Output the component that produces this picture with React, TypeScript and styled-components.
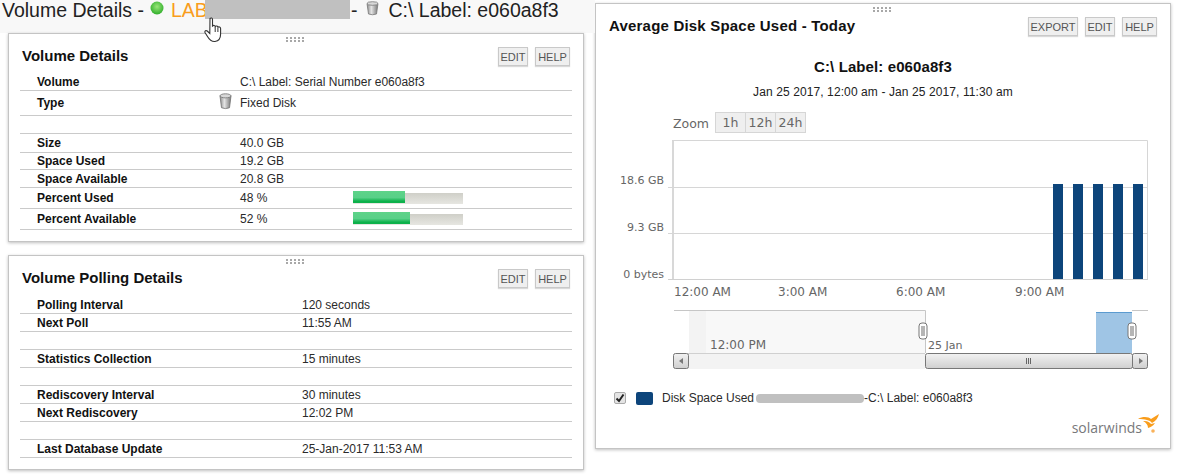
import React from 'react';
import styled, { createGlobalStyle } from 'styled-components';

const GlobalStyle = createGlobalStyle`
  html, body {
    margin: 0;
    padding: 0;
    background: #fff;
  }
  body {
    font-family: "Liberation Sans", Arial, sans-serif;
    color: #111;
  }
`;

const Page = styled.div`
  display: flex;
  align-items: flex-start;
  width: 1179px;
  height: 476px;
  overflow: hidden;
`;

const LeftColumn = styled.div`
  position: relative;
  width: 595px;
  flex: none;
`;

const RightColumn = styled.div`
  padding-top: 3px;
  width: 576px;
  flex: none;
`;

const PageHeader = styled.div`
  display: flex;
  align-items: flex-start;
  height: 33px;
  padding-left: 2px;
  font-size: 19.5px;
  line-height: 21px;
  background: #f8f8f8;
  color: #222;
  white-space: nowrap;
`;

const NodeName = styled.span`
  color: #f99d1c;
  margin-left: 7px;
  width: 34px;
`;

const Redacted = styled.span`
  display: block;
  width: 145px;
  height: 19px;
  background: #c0c0c0;
`;

const HeaderText = styled.span<{ $left?: number }>`
  margin-left: ${({ $left }) => $left ?? 0}px;
`;

const HeaderIcon = styled.svg<{ $left: number }>`
  margin-left: ${({ $left }) => $left}px;
  margin-top: 1px;
  flex: none;
`;

const HandCursor = styled.svg`
  position: absolute;
  left: 204px;
  top: 17px;
`;

const Stack = styled.div`
  display: flex;
  flex-direction: column;
  gap: 13px;
  padding-left: 8px;
  width: 576px;
`;

const Panel = styled.section<{ $height: number }>`
  box-sizing: border-box;
  height: ${({ $height }) => $height}px;
  padding: 0 11px;
  background: #fff;
  border: 1px solid #c4c4c4;
  box-shadow: 0 1px 3px rgba(0, 0, 0, 0.25);
`;

const Grip = styled.div`
  width: 20px;
  height: 5px;
  margin: 3px auto 0;
  background-image: radial-gradient(circle at 1px 1px, #a8a8a8 1px, transparent 1px);
  background-size: 4px 3px;
`;

const PanelHead = styled.div<{ $height: number }>`
  box-sizing: border-box;
  display: flex;
  align-items: flex-start;
  justify-content: space-between;
  height: ${({ $height }) => $height}px;
  padding: 5px 2px 0 2px;
`;

const PanelTitle = styled.h2<{ $spaced?: boolean }>`
  margin: 0;
  font-size: 15px;
  line-height: 18px;
  font-weight: bold;
  letter-spacing: ${({ $spaced }) => ($spaced ? '0.2px' : '0')};
  color: #111;
`;

const ButtonGroup = styled.div`
  display: flex;
  gap: 7px;
`;

const ActionButton = styled.button<{ $width: number }>`
  box-sizing: border-box;
  width: ${({ $width }) => $width}px;
  height: 19px;
  padding: 0;
  font-family: inherit;
  font-size: 11px;
  color: #555;
  background: #efefef;
  border: 1px solid #c9c9c9;
  box-shadow: 0 1px 1px rgba(0, 0, 0, 0.15);
`;

const Row = styled.div<{ $height: number; $valueX: number }>`
  box-sizing: border-box;
  display: grid;
  grid-template-columns: ${({ $valueX }) => $valueX - 37}px ${({ $valueX }) => 353 - $valueX}px 110px;
  align-items: center;
  height: ${({ $height }) => $height}px;
  padding-left: 17px;
  border-bottom: 1px solid #cacaca;
  font-size: 12px;
  white-space: nowrap;
`;

const Label = styled.span`
  font-weight: bold;
  color: #111;
`;

const Value = styled.span`
  position: relative;
  color: #2a2a2a;
`;

const TypeIcon = styled.svg`
  position: absolute;
  left: -21px;
  top: -3px;
`;

const Bar = styled.div`
  height: 11px;
  background: linear-gradient(#cfcfc8, #e6e6e1);
`;

const BarFill = styled.div`
  height: 12px;
  margin-top: -1px;
  position: relative;
  top: -1px;
  background: linear-gradient(#5ed389 0, #58d088 55%, #0db14b 85%, #0db14b 100%);
`;

const ChartTitle = styled.div`
  text-align: center;
  font-size: 15px;
  line-height: 18px;
  font-weight: bold;
  letter-spacing: 0.1px;
  color: #111;
`;

const ChartSubtitle = styled.div`
  margin-top: 8px;
  text-align: center;
  font-size: 12px;
  line-height: 16px;
  letter-spacing: 0.1px;
  color: #222;
`;

const ZoomBar = styled.div`
  display: flex;
  align-items: center;
  height: 21px;
  margin-top: 12px;
  padding-left: 66px;
  font-family: "DejaVu Sans", sans-serif;
  font-size: 12.5px;
  color: #666;
`;

const ZoomButton = styled.span`
  box-sizing: border-box;
  display: flex;
  align-items: center;
  justify-content: center;
  width: 31px;
  height: 21px;
  color: #666;
  background: #efefef;
  border: 1px solid #d6d6d6;
  margin-right: -1px;
`;

const ZoomLabel = styled.span`
  width: 42px;
  padding-top: 2px;
`;

const Chart = styled.svg`
  display: block;
  margin-top: 4px;
  margin-left: -11px;
`;

const Legend = styled.div`
  display: flex;
  align-items: center;
  height: 16px;
  margin-top: 15px;
  padding-left: 7px;
  font-size: 12px;
  color: #2a2a2a;
`;

const CheckBox = styled.span`
  box-sizing: border-box;
  display: flex;
  align-items: center;
  justify-content: center;
  width: 12px;
  height: 12px;
  background: #e4e4e4;
  border: 1px solid #aaa;
  border-radius: 2px;
`;

const Swatch = styled.span`
  width: 17px;
  height: 13px;
  margin: 0 9px 0 10px;
  background: #0d457b;
  border-radius: 2px;
`;

const RedactedPill = styled.span`
  display: block;
  width: 108px;
  height: 9px;
  margin-left: 2px;
  background: #c0c0c0;
  border-radius: 4px;
`;

const Brand = styled.div`
  display: flex;
  align-items: flex-start;
  justify-content: flex-end;
  height: 20px;
  margin-top: 8px;
`;

const BrandName = styled.span`
  margin-top: 6px;
  margin-right: -4px;
  font-family: "Open Sans", sans-serif;
  font-size: 14px;
  line-height: 16px;
  color: #77787b;
`;

type RowData = {
  label?: string;
  value?: string;
  height?: number;
  percent?: number;
  disk?: boolean;
};

const detailRows: RowData[] = [
  { label: 'Volume', value: 'C:\\ Label: Serial Number e060a8f3', height: 18 },
  { label: 'Type', value: 'Fixed Disk', height: 25, disk: true },
  { height: 18 },
  { label: 'Size', value: '40.0 GB', height: 19 },
  { label: 'Space Used', value: '19.2 GB', height: 17 },
  { label: 'Space Available', value: '20.8 GB', height: 18 },
  { label: 'Percent Used', value: '48 %', height: 21, percent: 47 },
  { label: 'Percent Available', value: '52 %', height: 21, percent: 52 },
];

const pollingRows: RowData[] = [
  { label: 'Polling Interval', value: '120 seconds' },
  { label: 'Next Poll', value: '11:55 AM' },
  {},
  { label: 'Statistics Collection', value: '15 minutes' },
  {},
  { label: 'Rediscovery Interval', value: '30 minutes' },
  { label: 'Next Rediscovery', value: '12:02 PM' },
  {},
  { label: 'Last Database Update', value: '25-Jan-2017 11:53 AM' },
];

const DiskGlyph = () => (
  <>
    <defs>
      <linearGradient id="disk" x1="0" x2="1" y1="0" y2="0">
        <stop offset="0" stopColor="#8d8d8d" />
        <stop offset="0.4" stopColor="#e4e4e4" />
        <stop offset="1" stopColor="#777" />
      </linearGradient>
    </defs>
    <path d="M1 2.5 L2.5 13 Q6.5 14.5 10.5 13 L12 2.5 Z" fill="url(#disk)" stroke="#777" strokeWidth="0.8" />
    <ellipse cx="6.5" cy="2.5" rx="5.5" ry="1.8" fill="#d8d8d8" stroke="#777" strokeWidth="0.8" />
  </>
);

const Rows = ({ rows, valueX }: { rows: RowData[]; valueX: number }) => (
  <div>
    {rows.map((row, i) => (
      <Row key={i} $height={row.height ?? 18} $valueX={valueX}>
        <Label>{row.label}</Label>
        <Value>
          {row.disk && (
            <TypeIcon width="13" height="17" viewBox="0 0 13 15" preserveAspectRatio="none">
              <DiskGlyph />
            </TypeIcon>
          )}
          {row.value}
        </Value>
        {row.percent !== undefined && (
          <Bar>
            <BarFill style={{ width: `${row.percent}%` }} />
          </Bar>
        )}
      </Row>
    ))}
  </div>
);

const axisText = { fontFamily: '"DejaVu Sans", sans-serif', fontSize: 11, fill: '#666' };
const timeText = { ...axisText, fontSize: 12 };

const DiskChart = () => (
  <Chart width="576" height="238" viewBox="596 137 576 238">
    <defs>
      <linearGradient id="thumb" x1="0" x2="0" y1="0" y2="1">
        <stop offset="0" stopColor="#f2f2f2" />
        <stop offset="1" stopColor="#cfcfcf" />
      </linearGradient>
    </defs>
    {/* plot */}
    <rect x="672" y="140" width="2" height="139" fill="#d8d8d8" />
    <path d="M672 140.5H1147.5V279" fill="none" stroke="#d6d6d6" />
    <path d="M668 187.5H1148M668 233.5H1148" stroke="#d6d6d6" />
    <rect x="668" y="279" width="480" height="1" fill="#d0d0d0" />
    {[1053, 1073, 1093, 1113, 1133].map((x) => (
      <rect key={x} x={x} y="184" width="10" height="95" fill="#0d457b" />
    ))}
    <text {...axisText} x="664" y="184" textAnchor="end">18.6 GB</text>
    <text {...axisText} x="664" y="231" textAnchor="end">9.3 GB</text>
    <text {...axisText} x="664" y="278" textAnchor="end">0 bytes</text>
    <text {...timeText} x="674" y="296">12:00 AM</text>
    <text {...timeText} x="778" y="296">3:00 AM</text>
    <text {...timeText} x="896" y="296">6:00 AM</text>
    <text {...timeText} x="1015" y="296">9:00 AM</text>
    {/* navigator */}
    <rect x="689" y="310" width="236" height="43" fill="#f8f8f8" />
    <rect x="689" y="310" width="17" height="43" fill="#f3f3f3" />
    <path d="M674 310.5H925.5V353M1132 310.5H1148" fill="none" stroke="#c6c6c6" />
    <rect x="1096" y="312" width="36" height="41" fill="#9fc5e5" />
    <rect x="1096" y="312" width="36" height="1" fill="#5b9bd0" />
    <text {...timeText} x="710" y="349">12:00 PM</text>
    <text {...axisText} x="928" y="349">25 Jan</text>
    {[923, 1132].map((x) => (
      <g key={x}>
        <rect x={x - 4} y="323" width="8" height="16" rx="3" fill="#fff" stroke="#777" />
        <rect x={x - 2} y="326" width="4" height="10" fill="#b5b5b5" />
      </g>
    ))}
    {/* scrollbar */}
    <rect x="688" y="353" width="237" height="16" fill="#f3f3f3" />
    <path d="M688 353.5H925" stroke="#d0d0d0" />
    <rect x="673.5" y="353.5" width="15" height="15" rx="2" fill="url(#thumb)" stroke="#777" />
    <path d="M683 358V364L679 361Z" fill="#777" />
    <rect x="925.5" y="353.5" width="207" height="15" rx="2" fill="url(#thumb)" stroke="#777" />
    <path d="M1026.5 358V364M1028.5 358V364M1030.5 358V364" stroke="#666" />
    <rect x="1132.5" y="353.5" width="15" height="15" rx="2" fill="url(#thumb)" stroke="#777" />
    <path d="M1139 358V364L1143 361Z" fill="#777" />
  </Chart>
);

const App = () => (
  <Page>
    <GlobalStyle />
    <LeftColumn>
      <PageHeader>
        <span>Volume Details -</span>
        <HeaderIcon $left={6} width="14" height="14" viewBox="0 0 14 14">
          <defs>
            <radialGradient id="ok" cx="0.5" cy="0.4" r="0.6">
              <stop offset="0" stopColor="#9ae67a" />
              <stop offset="1" stopColor="#2fae2a" />
            </radialGradient>
          </defs>
          <circle cx="7" cy="7" r="6.5" fill="url(#ok)" />
        </HeaderIcon>
        <NodeName>LAB</NodeName>
        <Redacted />
        <HeaderText $left={1}>-</HeaderText>
        <HeaderIcon $left={9} width="13" height="15" viewBox="0 0 13 15">
          <DiskGlyph />
        </HeaderIcon>
        <HeaderText $left={9}>C:\ Label: e060a8f3</HeaderText>
      </PageHeader>
      <HandCursor width="20" height="26" viewBox="0 0 20 26">
        <path
          d="M6 1.5 C7 0.5 8.5 1 8.5 2.5 V9 C9.5 8 11 8.3 11.2 9.5 C12.2 8.6 13.7 9 13.9 10.2 C15 9.5 16.5 10 16.6 11.5 V17 C16.6 21 15 24 11 24.5 C7.5 24.8 5.5 23 3.5 19.5 L1 15.5 C0.5 14 2 13 3.2 14 L5.8 16.5 Z"
          fill="#fff"
          stroke="#333"
          strokeWidth="1.1"
        />
        <path d="M11.2 10V15M13.9 11V15" stroke="#333" />
      </HandCursor>
      <Stack>
        <Panel $height={209}>
          <Grip />
          <PanelHead $height={31}>
            <PanelTitle>Volume Details</PanelTitle>
            <ButtonGroup>
              <ActionButton $width={30}>EDIT</ActionButton>
              <ActionButton $width={35}>HELP</ActionButton>
            </ButtonGroup>
          </PanelHead>
          <Rows rows={detailRows} valueX={240} />
        </Panel>
        <Panel $height={215}>
          <Grip />
          <PanelHead $height={32}>
            <PanelTitle>Volume Polling Details</PanelTitle>
            <ButtonGroup>
              <ActionButton $width={30}>EDIT</ActionButton>
              <ActionButton $width={35}>HELP</ActionButton>
            </ButtonGroup>
          </PanelHead>
          <Rows rows={pollingRows} valueX={302} />
        </Panel>
      </Stack>
    </LeftColumn>
    <RightColumn>
      <Panel $height={446}>
        <Grip />
        <PanelHead $height={46}>
          <PanelTitle $spaced>Average Disk Space Used - Today</PanelTitle>
          <ButtonGroup>
            <ActionButton $width={50}>EXPORT</ActionButton>
            <ActionButton $width={30}>EDIT</ActionButton>
            <ActionButton $width={35}>HELP</ActionButton>
          </ButtonGroup>
        </PanelHead>
        <ChartTitle>C:\ Label: e060a8f3</ChartTitle>
        <ChartSubtitle>Jan 25 2017, 12:00 am - Jan 25 2017, 11:30 am</ChartSubtitle>
        <ZoomBar>
          <ZoomLabel>Zoom</ZoomLabel>
          <ZoomButton>1h</ZoomButton>
          <ZoomButton>12h</ZoomButton>
          <ZoomButton>24h</ZoomButton>
        </ZoomBar>
        <DiskChart />
        <Legend>
          <CheckBox>
            <svg width="10" height="10" viewBox="0 0 10 10">
              <path d="M1.5 5.5L4 8L8.5 1.5" fill="none" stroke="#222" strokeWidth="2" />
            </svg>
          </CheckBox>
          <Swatch />
          <span>Disk Space Used</span>
          <RedactedPill />
          <span>-C:\ Label: e060a8f3</span>
        </Legend>
        <Brand>
          <BrandName>solarwinds</BrandName>
          <svg width="21" height="20" viewBox="0 0 21 20">
            <path d="M0 5 C5 2 11 3 13 5 L21 0 C20 4 18 7 14 9 C12 6 7 5 0 5Z" fill="#f99d1c" />
            <path d="M5 7 C9 6.5 12 8 13 10 L17 9 C15 12 13 13 10 14 C10 11 8 8.5 5 7Z" fill="#f99d1c" />
            <circle cx="15" cy="17" r="1.8" fill="#f9b25a" />
          </svg>
        </Brand>
      </Panel>
    </RightColumn>
  </Page>
);

export default App;
